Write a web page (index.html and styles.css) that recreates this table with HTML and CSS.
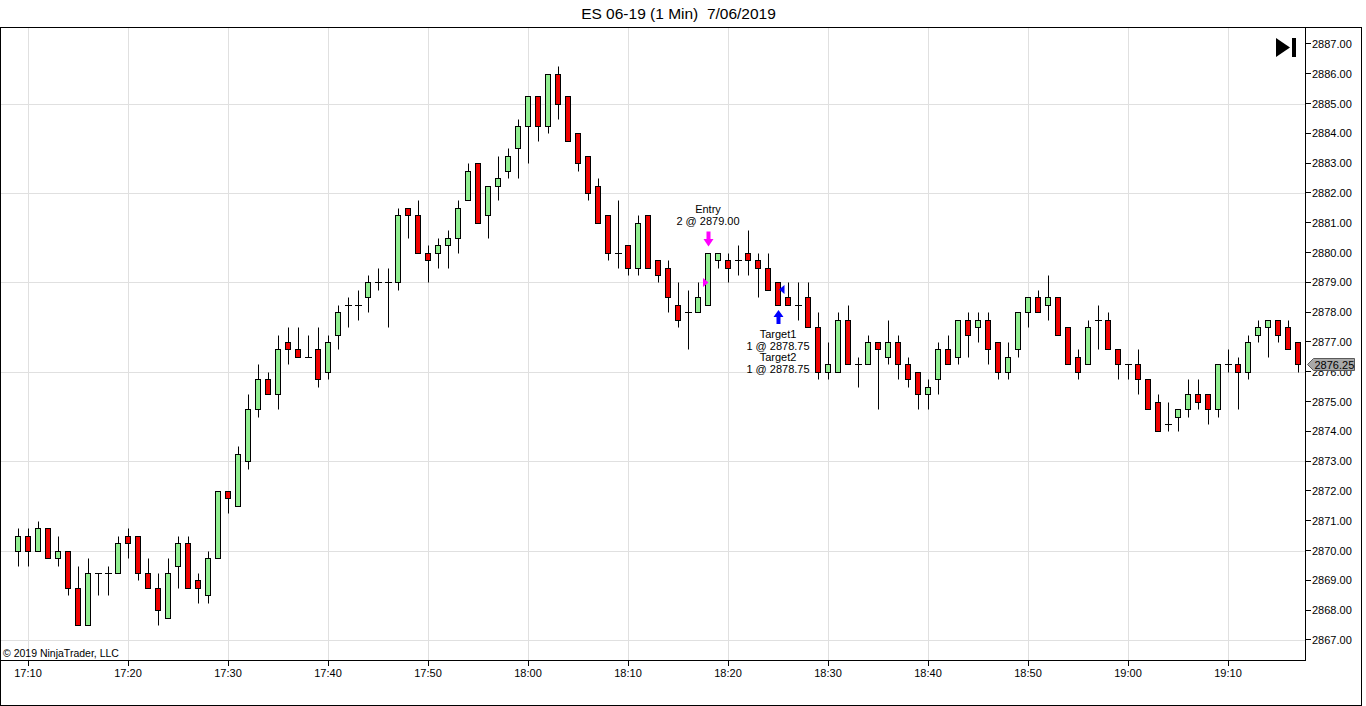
FILE: index.html
```html
<!DOCTYPE html>
<html lang="en">
<head>
<meta charset="utf-8">
<title>ES 06-19 (1 Min) 7/06/2019</title>
<link rel="stylesheet" href="styles.css">
</head>
<body>
<div class="title">ES 06-19 (1 Min)  7/06/2019</div>
<div class="frame">
  <div class="plot">
    <svg class="chart" viewBox="1 28 1304 632" width="1304" height="632">
      <g id="grid" class="grid"></g>
      <g id="candles"></g>
      <g class="annot">
        <text x="708" y="213">Entry</text>
        <text x="708" y="224.7">2 @ 2879.00</text>
        <text x="778" y="338">Target1</text>
        <text x="778" y="349.7">1 @ 2878.75</text>
        <text x="778" y="361.4">Target2</text>
        <text x="778" y="373.1">1 @ 2878.75</text>
      </g>
      <polygon class="m-entry" points="706.5,231.5 710.5,231.5 710.5,239 713.5,239 708.5,246.5 703.5,239 706.5,239"/>
      <polygon class="m-entry" points="703,278 708.5,282.5 703,287"/>
      <polygon class="m-exit" points="778.5,310 783.5,317 780.5,317 780.5,324 776.5,324 776.5,317 773.5,317"/>
      <polygon class="m-exit" points="779,289.5 784.5,285 784.5,294"/>
    </svg>
    <svg class="skip-icon" width="20" height="19" viewBox="0 0 20 19">
      <polygon points="0,0 14,9.5 0,19"/>
      <rect x="16" y="0" width="4" height="19"/>
    </svg>
    <div class="copyright">© 2019 NinjaTrader, LLC</div>
  </div>
  <div class="y-axis">
    <div class="y-label">2887.00</div>
    <div class="y-label">2886.00</div>
    <div class="y-label">2885.00</div>
    <div class="y-label">2884.00</div>
    <div class="y-label">2883.00</div>
    <div class="y-label">2882.00</div>
    <div class="y-label">2881.00</div>
    <div class="y-label">2880.00</div>
    <div class="y-label">2879.00</div>
    <div class="y-label">2878.00</div>
    <div class="y-label">2877.00</div>
    <div class="y-label">2876.00</div>
    <div class="y-label">2875.00</div>
    <div class="y-label">2874.00</div>
    <div class="y-label">2873.00</div>
    <div class="y-label">2872.00</div>
    <div class="y-label">2871.00</div>
    <div class="y-label">2870.00</div>
    <div class="y-label">2869.00</div>
    <div class="y-label">2868.00</div>
    <div class="y-label">2867.00</div>
    <svg class="price-tag" width="48" height="13" viewBox="0 0 48 13">
      <polygon points="0.5,6.5 6.5,0.5 47.5,0.5 47.5,12.5 6.5,12.5"/>
      <text x="7.5" y="10.5">2876.25</text>
    </svg>
  </div>
  <div class="x-axis">
    <div class="x-label">17:10</div>
    <div class="x-label">17:20</div>
    <div class="x-label">17:30</div>
    <div class="x-label">17:40</div>
    <div class="x-label">17:50</div>
    <div class="x-label">18:00</div>
    <div class="x-label">18:10</div>
    <div class="x-label">18:20</div>
    <div class="x-label">18:30</div>
    <div class="x-label">18:40</div>
    <div class="x-label">18:50</div>
    <div class="x-label">19:00</div>
    <div class="x-label">19:10</div>
  </div>
  <div class="corner"></div>
</div>
<script src="script.js"></script>
</body>
</html>
```

FILE: styles.css
```css
* { box-sizing: border-box; }
html, body { margin: 0; background: #fff; }
body {
  font-family: "Liberation Sans", Arial, sans-serif;
  color: #000;
  width: 1366px;
  height: 706px;
  overflow: hidden;
}
.title {
  width: 1362px;
  height: 27px;
  line-height: 27px;
  text-align: center;
  font-size: 15.5px;
  white-space: pre;
  padding-right: 5px;
}
.frame {
  width: 1362px;
  height: 679px;
  border: 1px solid #000;
  display: grid;
  grid-template-columns: 1305px 55px;
  grid-template-rows: 633px 44px;
}
.plot {
  position: relative;
  border-right: 1px solid #000;
  border-bottom: 1px solid #000;
  overflow: hidden;
}
.chart { display: block; }
.grid line { stroke: #e0e0e0; stroke-width: 1; }
.wick { stroke: #000; stroke-width: 1; }
.doji { stroke: #000; stroke-width: 1; }
.up { fill: #90ee90; stroke: #000; stroke-width: 1; }
.down { fill: #f00000; stroke: #000; stroke-width: 1; }
.annot text {
  font-family: "Liberation Sans", Arial, sans-serif;
  font-size: 11px;
  text-anchor: middle;
  fill: #000;
}
.m-entry { fill: #ff00ff; }
.m-exit { fill: #0000ff; }
.skip-icon {
  position: absolute;
  top: 10px;
  right: 9px;
  fill: #000;
}
.copyright {
  position: absolute;
  left: 2px;
  bottom: 1px;
  font-size: 10.5px;
  line-height: 12px;
  white-space: nowrap;
}
.y-axis {
  position: relative;
  display: flex;
  flex-direction: column;
  padding-top: 1.1px;
}
.y-label {
  flex: none;
  height: 29.8px;
  display: flex;
  align-items: center;
  gap: 1px;
  font-size: 11px;
  white-space: nowrap;
}
.y-label::before {
  content: "";
  flex: none;
  width: 5px;
  height: 1px;
  background: #000;
}
.price-tag {
  position: absolute;
  left: 1px;
  top: 330px;
}
.price-tag polygon { fill: #a8a8a8; stroke: #5a5a5a; stroke-width: 1; }
.price-tag text {
  font-family: "Liberation Sans", Arial, sans-serif;
  font-size: 11px;
  fill: #000;
}
.x-axis {
  display: flex;
  gap: 60px;
  padding-left: 7px;
}
.x-label {
  flex: none;
  width: 40px;
  position: relative;
  text-align: center;
  font-size: 11px;
  line-height: 13px;
  padding-top: 6px;
}
.x-label::before {
  content: "";
  position: absolute;
  left: 50%;
  top: 0;
  width: 1px;
  height: 5px;
  background: #000;
}
```

FILE: script.js
```js
(function () {
  // [open, high, low, close] for each 1-minute bar from 17:09 to 19:17
  var data = [
    [2870,2870.75,2869.5,2870.5],[2870.5,2870.75,2869.5,2870],[2870,2871,2870,2870.75],
    [2870.75,2870.75,2869.75,2869.75],[2869.75,2870.5,2869.5,2870],[2870,2870,2868.5,2868.75],
    [2868.75,2869.5,2867.5,2867.5],[2867.5,2869.75,2867.5,2869.25],[2869.25,2869.25,2868.5,2869.25],
    [2869.25,2869.5,2868.5,2869.25],[2869.25,2870.5,2869.25,2870.25],[2870.5,2870.75,2869.75,2870.25],
    [2870.5,2870.5,2869,2869.25],[2869.25,2869.75,2868.75,2868.75],[2868.75,2869.25,2867.5,2868],
    [2867.75,2869.75,2867.75,2869.25],[2869.5,2870.5,2868.75,2870.25],[2870.25,2870.5,2868.75,2868.75],
    [2869,2869.25,2868.25,2868.75],[2868.5,2870,2868.25,2869.75],[2869.75,2872,2869.75,2872],
    [2872,2872,2871.25,2871.75],[2871.5,2873.5,2871.5,2873.25],[2873,2875.25,2872.75,2874.75],
    [2874.75,2876.25,2874.5,2875.75],[2875.75,2876,2875.25,2875.25],[2875.25,2877.25,2874.75,2876.75],
    [2877,2877.5,2876.25,2876.75],[2876.75,2877.5,2876.5,2876.5],[2876.5,2877.25,2876.5,2876.5],
    [2876.75,2877.5,2875.5,2875.75],[2876,2877.25,2875.75,2877],[2877.25,2878.25,2876.75,2878],
    [2878.25,2878.5,2877.5,2878.25],[2878.25,2878.75,2877.75,2878.25],[2878.5,2879.25,2878,2879],
    [2879,2879.5,2878.75,2879],[2879,2879.5,2877.5,2879],[2879,2881.5,2878.75,2881.25],
    [2881.5,2881.5,2880.5,2881.25],[2881.25,2881.75,2880,2880],[2880,2880.25,2879,2879.75],
    [2880,2880.5,2879.5,2880.25],[2880.25,2880.75,2879.5,2880.5],[2880.5,2881.75,2880,2881.5],
    [2881.75,2883,2881.75,2882.75],[2883,2883,2881,2881],[2881.25,2882.25,2880.5,2882.25],
    [2882.25,2883.25,2881.75,2882.5],[2882.75,2883.5,2882.5,2883.25],[2883.5,2884.5,2882.5,2884.25],
    [2884.25,2885.25,2883,2885.25],[2885.25,2885.25,2883.75,2884.25],[2884.25,2886,2884,2886],
    [2886,2886.25,2884.5,2885],[2885.25,2885.25,2883.75,2883.75],[2884,2884,2882.75,2883],
    [2883.25,2883.25,2881.75,2882],[2882.25,2882.5,2881,2881],[2881.25,2881.25,2879.75,2880],
    [2880,2881.75,2879.5,2880],[2880.25,2880.25,2879.25,2879.5],[2879.5,2881.25,2879.25,2881],
    [2881.25,2881.25,2879.5,2879.5],[2879.75,2879.75,2879,2879.25],[2879.5,2879.75,2878,2878.5],
    [2878.25,2879,2877.5,2877.75],[2878,2878.75,2876.75,2878],[2878,2879,2878,2878.5],
    [2878.25,2880,2878.25,2880],[2879.75,2880,2879.5,2880],[2879.75,2880,2879,2879.5],
    [2879.75,2880.25,2879.25,2879.75],[2880,2880.75,2879.25,2879.75],[2879.75,2880,2878.5,2879.5],
    [2879.5,2880,2878.75,2878.75],[2879,2879,2878.25,2878.25],[2878.5,2879,2878.25,2878.25],
    [2878.25,2879,2877.75,2878.25],[2878.5,2879,2877.5,2877.5],[2877.5,2878,2875.75,2876],
    [2876,2877,2875.75,2876.25],[2876,2878,2876,2877.75],[2877.75,2878.25,2876.25,2876.25],
    [2876.25,2876.5,2875.5,2876.25],[2876.25,2877.25,2876.25,2877],[2877,2877,2874.75,2876.75],
    [2876.5,2877.75,2876.25,2877],[2877,2877.25,2875.75,2876.25],[2876.25,2876.5,2875.5,2875.75],
    [2876,2876,2874.75,2875.25],[2875.25,2875.75,2874.75,2875.5],[2875.75,2877,2875.25,2876.75],
    [2876.75,2877.25,2876.25,2876.25],[2876.5,2877.75,2876.25,2877.75],[2877.75,2878,2876.5,2877.25],
    [2877.5,2878,2877,2877.75],[2877.75,2878,2876.25,2876.75],[2877,2877,2875.75,2876],
    [2876,2877,2875.75,2876.5],[2876.75,2878,2876.5,2878],[2878,2878.5,2877.5,2878.5],
    [2878.5,2878.75,2878,2878],[2878.25,2879.25,2877.75,2878.5],[2878.5,2878.5,2877.25,2877.25],
    [2877.5,2877.5,2876.25,2876.25],[2876.5,2876.75,2875.75,2876],[2876.25,2877.75,2876.25,2877.5],
    [2877.75,2878.25,2876.75,2877.75],[2877.75,2878,2876.75,2876.75],[2876.75,2876.75,2875.75,2876.25],
    [2876.25,2876.25,2875.75,2876.25],[2876.25,2876.75,2875.25,2875.75],[2875.75,2875.75,2874.75,2874.75],
    [2875,2875.25,2874,2874],[2874.25,2875,2874,2874.25],[2874.5,2874.75,2874,2874.75],
    [2874.75,2875.75,2874.5,2875.25],[2875.25,2875.75,2874.75,2875],[2875.25,2875.25,2874.25,2874.75],
    [2874.75,2876.25,2874.5,2876.25],[2876.25,2876.75,2876,2876.25],[2876.25,2876.5,2874.75,2876],
    [2876,2877.25,2875.75,2877],[2877.25,2877.75,2877,2877.5],[2877.5,2877.75,2876.5,2877.75],
    [2877.75,2877.75,2877,2877.25],[2877.5,2877.75,2876.75,2876.75],[2877,2877,2876,2876.25]
  ];
  var NS = 'http://www.w3.org/2000/svg';
  function Y(p) { return Math.round(44 + (2887 - p) * 29.8) + 0.5; }
  function el(tag, attrs) {
    var e = document.createElementNS(NS, tag);
    for (var k in attrs) e.setAttribute(k, attrs[k]);
    return e;
  }
  var grid = document.getElementById('grid');
  for (var k = 0; k <= 12; k++) {
    var gx = 28 + 100 * k + 0.5;
    grid.appendChild(el('line', { x1: gx, y1: 28, x2: gx, y2: 660 }));
  }
  [2885, 2882, 2879, 2876, 2873, 2870, 2867].forEach(function (p) {
    var gy = Y(p);
    grid.appendChild(el('line', { x1: 1, y1: gy, x2: 1305, y2: gy }));
  });
  var g = document.getElementById('candles');
  data.forEach(function (d, i) {
    var o = d[0], h = d[1], l = d[2], c = d[3];
    var cx = 18 + i * 10;
    if (h > l) g.appendChild(el('line', { 'class': 'wick', x1: cx + 0.5, y1: Y(h), x2: cx + 0.5, y2: Y(l) }));
    if (o === c) {
      g.appendChild(el('line', { 'class': 'doji', x1: cx - 3, y1: Y(o), x2: cx + 4, y2: Y(o) }));
    } else {
      var top = Y(Math.max(o, c)), bot = Y(Math.min(o, c));
      g.appendChild(el('rect', { 'class': c > o ? 'up' : 'down', x: cx - 2.5, y: top, width: 5, height: bot - top }));
    }
  });
})();
```
